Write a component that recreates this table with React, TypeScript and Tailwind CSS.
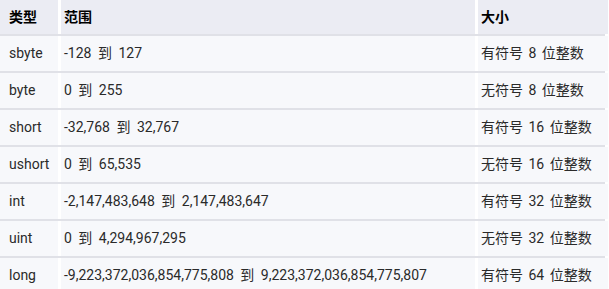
import React from "react";

const rows: [string, string, string][] = [
  ["sbyte", "-128 到 127", "有符号 8 位整数"],
  ["byte", "0 到 255", "无符号 8 位整数"],
  ["short", "-32,768 到 32,767", "有符号 16 位整数"],
  ["ushort", "0 到 65,535", "无符号 16 位整数"],
  ["int", "-2,147,483,648 到 2,147,483,647", "有符号 32 位整数"],
  ["uint", "0 到 4,294,967,295", "无符号 32 位整数"],
  ["long", "-9,223,372,036,854,775,808 到 9,223,372,036,854,775,807", "有符号 64 位整数"],
];

export default function App() {
  return (
    <div
      className="w-[609px] h-[289px] overflow-hidden bg-white text-[14px] text-[#2a2a2a]"
      style={{ fontFamily: 'Roboto, "Noto Sans CJK SC", sans-serif' }}
    >
      <div className="w-[605px] flex flex-col">
        <div className="grid grid-cols-[58px_414px_130px] gap-x-[3px] h-[34px] font-bold text-black">
          <div className="bg-[#ebecf3] pl-[9px] flex items-center">类型</div>
          <div className="bg-[#ebecf3] pl-[3px] flex items-center">范围</div>
          <div className="bg-[#ebecf3] pl-[3px] flex items-center">大小</div>
        </div>
        {rows.map((r) => (
          <div key={r[0]} className="border-t-2 border-[#e0e1e7] grid grid-cols-[58px_414px_130px] gap-x-[3px] h-[37px]">
            <div className="bg-[#f7f8fb] pl-[9px] flex items-center">{r[0]}</div>
            <div className="bg-[#f7f8fb] pl-[3px] flex items-center whitespace-nowrap [word-spacing:3px]">{r[1]}</div>
            <div className="bg-[#f7f8fb] pl-[3px] flex items-center whitespace-nowrap [word-spacing:2px]">{r[2]}</div>
          </div>
        ))}
      </div>
    </div>
  );
}
